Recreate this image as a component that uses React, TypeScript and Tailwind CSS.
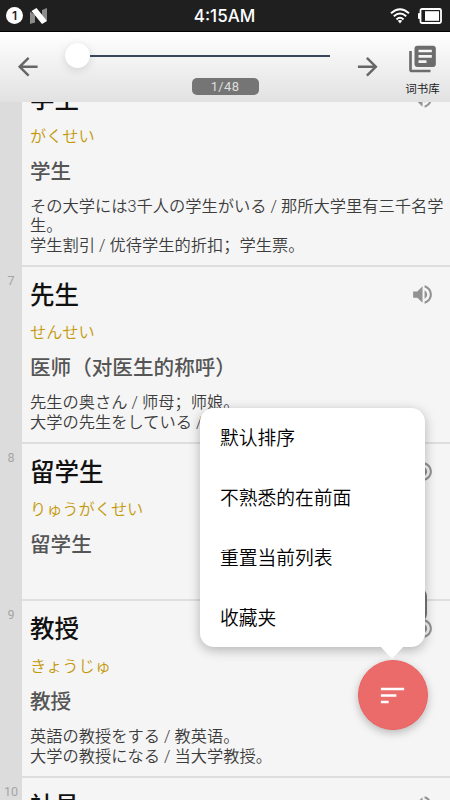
import React, { useState } from 'react';
import { MdArrowBack, MdArrowForward, MdLibraryBooks, MdSort, MdVolumeUp } from 'react-icons/md';

interface Word {
  id: number;
  title: string;
  kana: string;
  meaning: string;
  examples: string[];
}

const words: Word[] = [
  {
    id: 6,
    title: '学生',
    kana: 'がくせい',
    meaning: '学生',
    examples: ['その大学には3千人の学生がいる / 那所大学里有三千名学生。', '学生割引 / 优待学生的折扣；学生票。']
  },
  {
    id: 7,
    title: '先生',
    kana: 'せんせい',
    meaning: '医师（对医生的称呼）',
    examples: ['先生の奥さん / 师母；师娘。', '大学の先生をしている /']
  },
  { id: 8, title: '留学生', kana: 'りゅうがくせい', meaning: '留学生', examples: [''] },
  {
    id: 9,
    title: '教授',
    kana: 'きょうじゅ',
    meaning: '教授',
    examples: ['英語の教授をする / 教英语。', '大学の教授になる / 当大学教授。']
  },
  { id: 10, title: '社員', kana: '', meaning: '', examples: [''] }
];

const menuItems = ['默认排序', '不熟悉的在前面', '重置当前列表', '收藏夹'];

const StatusBar: React.FC = () => (
  <div className="flex h-8 shrink-0 items-center justify-between border-b border-black bg-[#1f1f1f] pl-[6px] pr-[8px]">
    <div className="flex w-[60px] items-center gap-[7px]">
      <span className="flex size-[17px] items-center justify-center rounded-full bg-white font-['Inter'] text-[12px] font-semibold leading-none text-[#1f1f1f]">
        1
      </span>
      <svg width="17" height="16" viewBox="0 0 17 16">
        <path d="M0 3.5 5 7v7.5L0 16z" fill="#8c8c8c" />
        <path d="M17 0v13l-5-4V2z" fill="#8c8c8c" />
        <path d="M1.5 3 6.5 0 17 13l-5 3z" fill="#fff" />
      </svg>
    </div>
    <span className="ml-px pt-[2px] font-['Inter'] text-[17px] font-medium leading-none text-white">4:15AM</span>
    <div className="flex w-[60px] items-center justify-end gap-2">
      <svg width="20" height="16" viewBox="0 0 20 16" fill="none" stroke="#fff" strokeWidth="2">
        <path d="M1 5.2Q10-2.7 19 5.2" />
        <path d="M3.8 8.3Q10 2.8 16.2 8.3" />
        <path d="M6.5 11.4Q10 8.2 13.5 11.4" />
        <path d="M7.8 12.8Q10 11.2 12.2 12.8L10 15.6z" fill="#fff" stroke="none" />
      </svg>
      <svg width="24" height="16" viewBox="0 0 24 16">
        <rect x="0" y="5" width="3" height="6" rx="1" fill="#fff" />
        <rect x="2.5" y="1" width="20.5" height="14" rx="1.5" fill="none" stroke="#fff" strokeWidth="1.8" />
        <rect x="7" y="3.2" width="14" height="9.6" fill="#fff" />
      </svg>
    </div>
  </div>
);

const Header: React.FC = () => (
  <div className="flex h-[70px] shrink-0 border-b border-[#e2e2e2] bg-gradient-to-b from-white to-[#e2e2e2]">
    <button className="flex w-[65px] items-center pl-[13px] pt-px text-[#666]">
      <MdArrowBack size={29.5} />
    </button>
    <div className="flex w-[265px] flex-col items-center pt-[11px]">
      <div className="flex w-full items-center">
        <div className="size-[25px] rounded-full bg-white shadow-[0_2px_8px_rgba(0,0,0,0.13)]" />
        <div className="h-[2px] grow bg-[#39465a]" />
      </div>
      <div className="mt-[10px] ml-[55px] flex h-[17px] w-[67px] items-center justify-center rounded-[5px] bg-[#757575] font-['Roboto'] text-[13px] tracking-[0.3px] text-[#dedede]">
        1/48
      </div>
    </div>
    <button className="flex w-[65px] items-center pl-[23px] pt-px text-[#666]">
      <MdArrowForward size={29.5} />
    </button>
    <div className="flex w-[55px] flex-col items-center pt-[11px] text-[#6c6c6c]">
      <MdLibraryBooks size={35} />
      <span className="mt-[2px] text-[11.5px] leading-[24px] text-[#222]">词书库</span>
    </div>
  </div>
);

const WordCard: React.FC<{ word: Word }> = ({ word }) => (
  <div className="flex">
    <div className="w-[22px] shrink-0 pt-[5px] text-center font-['Roboto'] text-[12.5px] text-[#a5a5a5]">{word.id}</div>
    <div className="min-w-0 grow border-b-2 border-[#dedede] bg-[#f5f5f5] pt-[11px] pb-[10px] pl-2">
      <div className="flex items-center justify-between pr-[15px]">
        <h2 className="text-[24.5px] font-medium leading-[36px] text-[#111]">{word.title}</h2>
        <MdVolumeUp className="-mt-[4px]" size={25} color="#929292" />
      </div>
      <p className="mt-[6px] text-[16.2px] font-[350] leading-[24px] text-[#c49a0c]">{word.kana}</p>
      <p className="mt-[9px] text-[20.6px] font-medium leading-[30px] text-[#555]">{word.meaning}</p>
      <div className="mt-[10px] font-['Roboto','Noto_Sans_CJK_SC',sans-serif] text-[16.25px] font-[350] leading-[19.4px] text-[#3c3c3c]">
        {word.examples.map((example, i) => (
          <p key={i} className="min-h-[19.4px] break-all">
            {example}
          </p>
        ))}
      </div>
    </div>
  </div>
);

const App: React.FC = () => {
  const [open, setOpen] = useState(true);

  return (
    <div className="relative flex h-[800px] w-[450px] flex-col overflow-hidden bg-[#dcdcdc] font-['Liberation_Sans','Noto_Sans_CJK_SC',sans-serif]">
      <StatusBar />
      <Header />
      <div className="min-h-0 grow overflow-hidden">
        <div className="-mt-[31px]">
          {words.map((word) => (
            <WordCard key={word.id} word={word} />
          ))}
        </div>
      </div>

      {/* scroll thumb */}
      <div className="absolute right-[23px] top-[586px] h-[38px] w-[22px] rounded-[11px] bg-[#777]" />

      {open && (
        <div className="absolute left-[200px] top-[408px] h-[239px] w-[225px] rounded-[14px] bg-white shadow-[0_3px_12px_rgba(0,0,0,0.28)]">
          <ul>
            {menuItems.map((item) => (
              <li key={item} className="flex h-[60px] items-center pl-[20px] pt-[3px] text-[18.75px] font-[350] text-black">
                {item}
              </li>
            ))}
          </ul>
          <svg className="absolute left-[180px] top-[238px]" width="24" height="13" viewBox="0 0 24 13">
            <path d="M0 0h24L12 13z" fill="#fff" />
          </svg>
        </div>
      )}

      <button
        className="absolute left-[357.5px] top-[660px] flex size-[70px] items-center justify-center rounded-full border border-[#ee6060] bg-[#ea6b6a] text-white shadow-[0_3px_8px_rgba(0,0,0,0.25)]"
        onClick={() => setOpen(!open)}
      >
        <MdSort size={31} />
      </button>
    </div>
  );
};

export default App;
